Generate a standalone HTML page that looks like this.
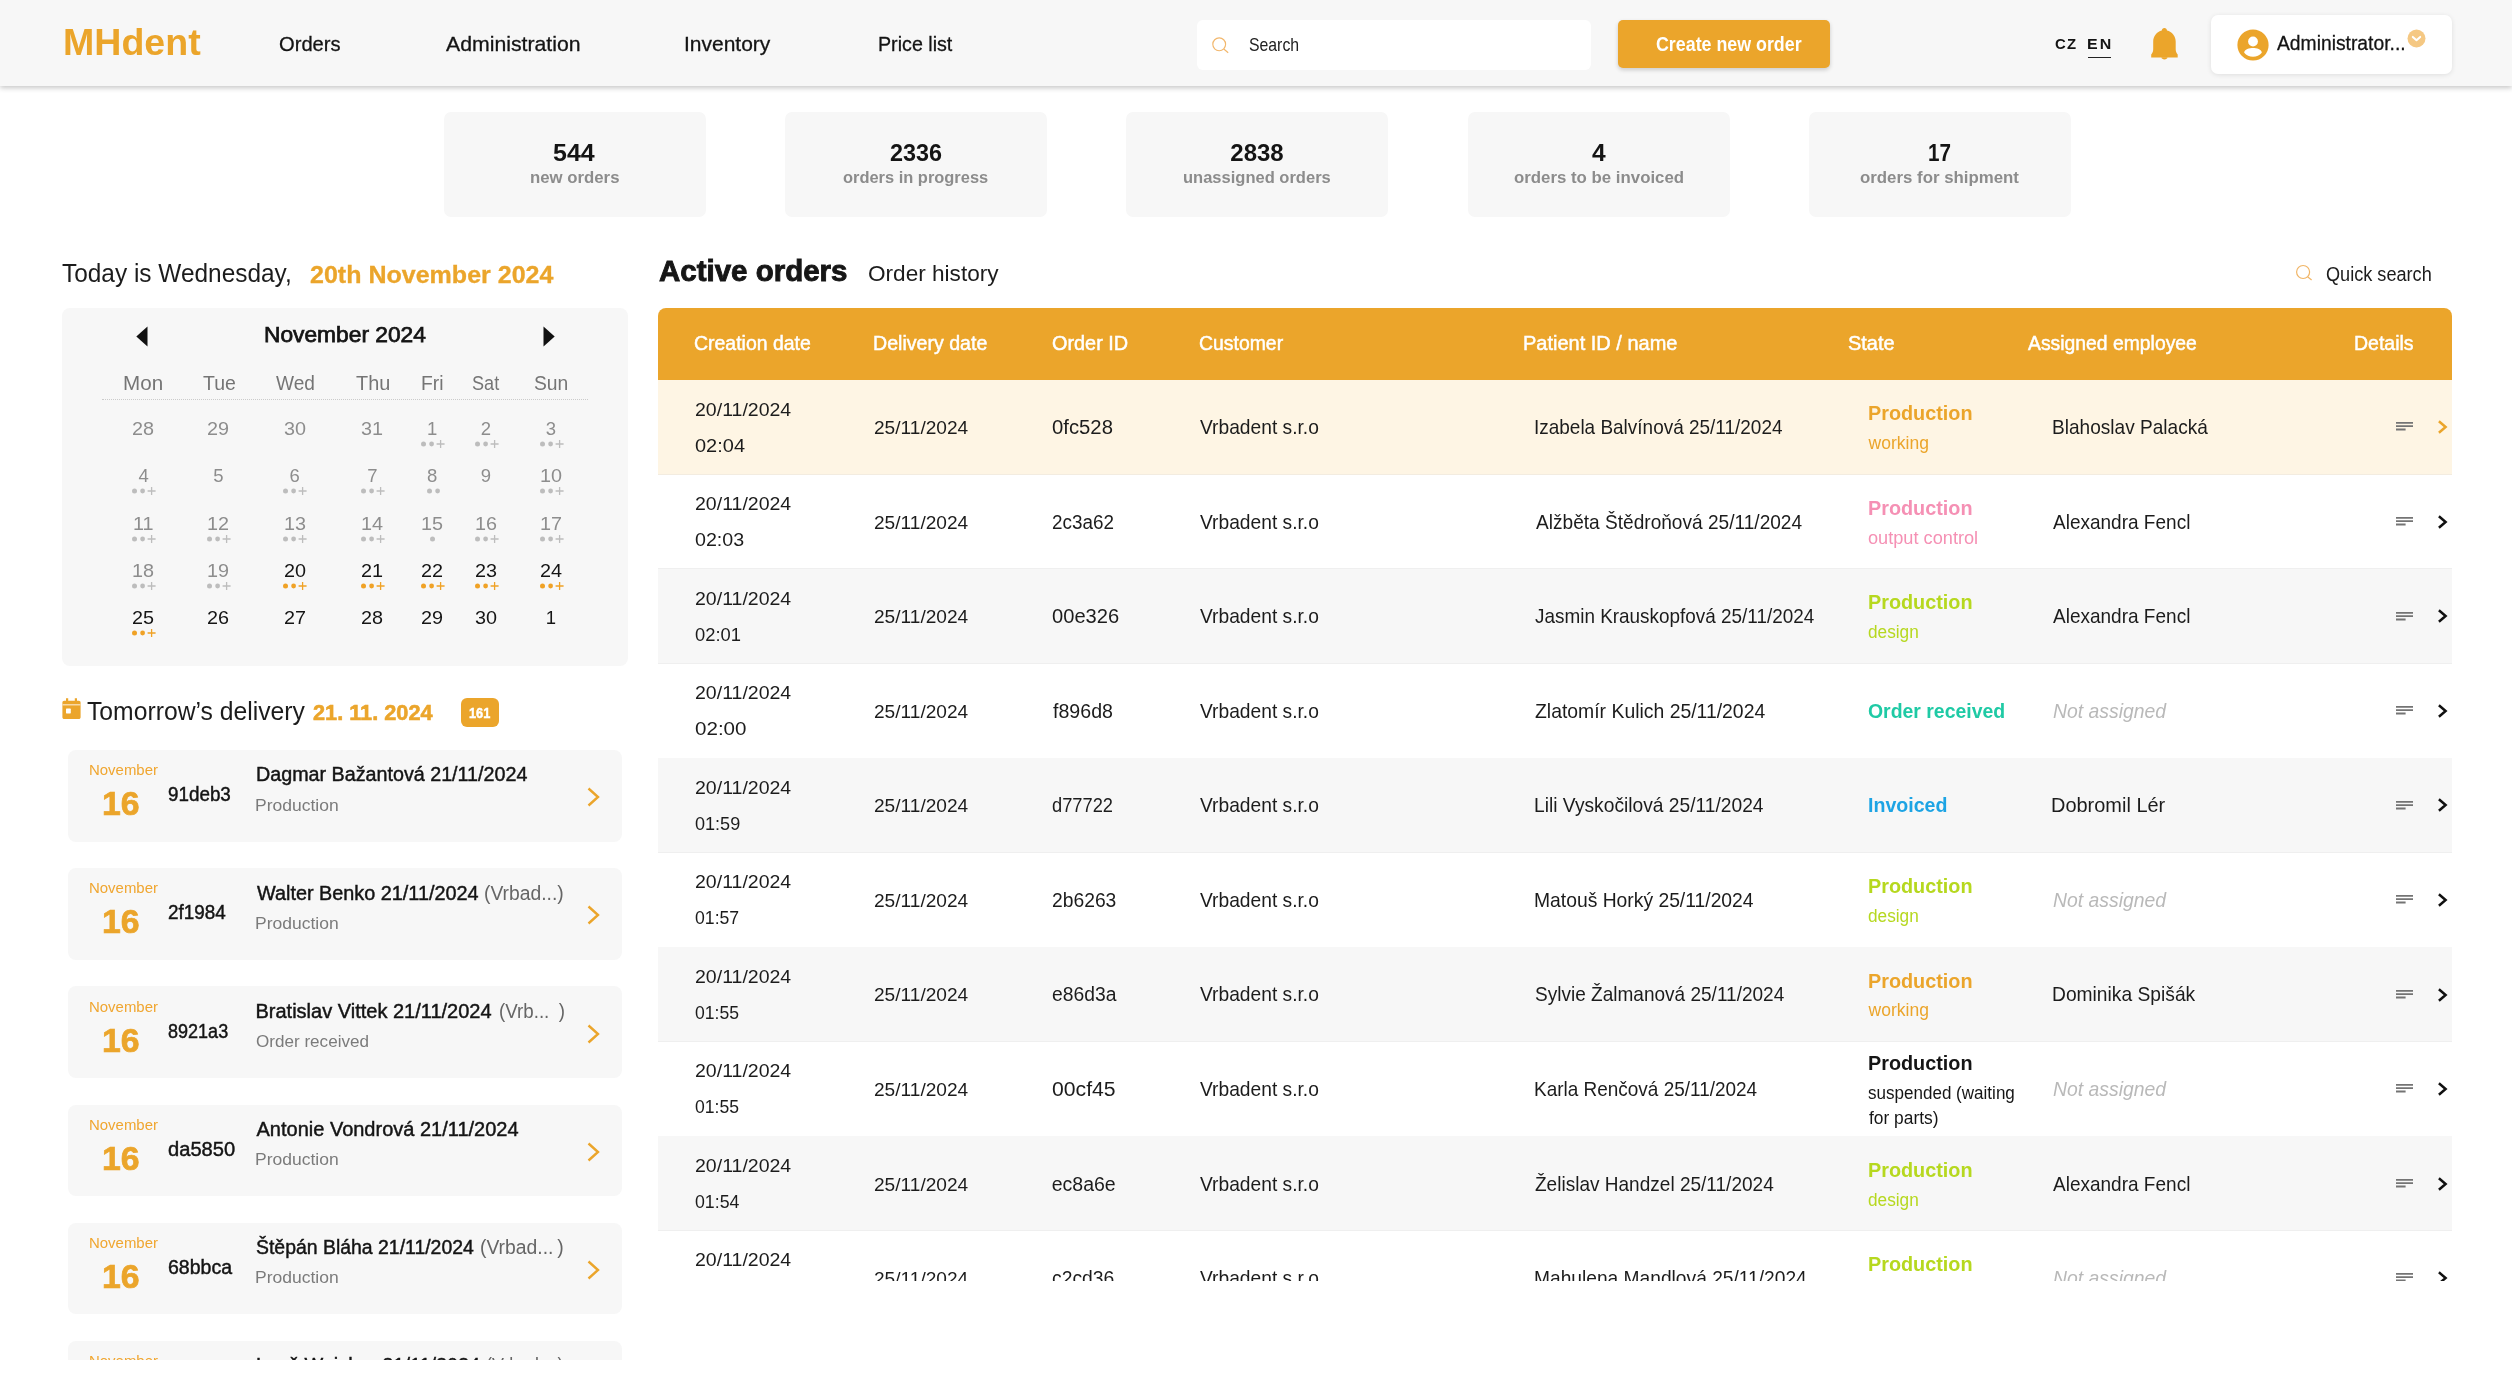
<!DOCTYPE html>
<html lang="en">
<head>
<meta charset="utf-8">
<title>MHdent - Orders</title>
<style>
*{margin:0;padding:0}
html,body{width:2512px;height:1374px;overflow:hidden;background:#fff}
body{position:relative;font-family:"Liberation Sans",sans-serif;color:#141414}
.g{position:absolute;left:0;top:0;width:2512px;overflow:hidden;will-change:transform}
.b{position:absolute;display:block}
.t{position:absolute;white-space:pre;line-height:1;transform-origin:0 0}
</style>
</head>
<body>
<section class="g" style="top:0;height:240px">
<div class="b" style="left:443.6px;top:112.2px;width:262.2px;height:104.4px;background:#f7f7f7;border-radius:7px;"></div>
<span class="t" style="font-size:24px;top:141px;font-weight:700;left:553.36px;transform:scaleX(1.0410);">544</span>
<span class="t" style="font-size:17px;top:169px;font-weight:700;color:#8c8c8c;left:529.81px;transform:scaleX(0.9865);">new orders</span>
<div class="b" style="left:784.9px;top:112.2px;width:262.2px;height:104.4px;background:#f7f7f7;border-radius:7px;"></div>
<span class="t" style="font-size:24px;top:141px;font-weight:700;left:889.68px;transform:scaleX(0.9750);">2336</span>
<span class="t" style="font-size:17px;top:169px;font-weight:700;color:#8c8c8c;left:843.03px;transform:scaleX(0.9664);">orders in progress</span>
<div class="b" style="left:1126.2px;top:112.2px;width:262.2px;height:104.4px;background:#f7f7f7;border-radius:7px;"></div>
<span class="t" style="font-size:24px;top:141px;font-weight:700;left:1230.30px;">2838</span>
<span class="t" style="font-size:17px;top:169px;font-weight:700;color:#8c8c8c;left:1182.98px;transform:scaleX(0.9715);">unassigned orders</span>
<div class="b" style="left:1467.5px;top:112.2px;width:262.2px;height:104.4px;background:#f7f7f7;border-radius:7px;"></div>
<span class="t" style="font-size:24px;top:141px;font-weight:700;left:1591.95px;transform:scaleX(1.0231);">4</span>
<span class="t" style="font-size:17px;top:169px;font-weight:700;color:#8c8c8c;left:1513.51px;transform:scaleX(0.9894);">orders to be invoiced</span>
<div class="b" style="left:1808.8px;top:112.2px;width:262.2px;height:104.4px;background:#f7f7f7;border-radius:7px;"></div>
<span class="t" style="font-size:24px;top:141px;font-weight:700;left:1928.29px;transform:scaleX(0.8600);">17</span>
<span class="t" style="font-size:17px;top:169px;font-weight:700;color:#8c8c8c;left:1859.71px;transform:scaleX(0.9900);">orders for shipment</span>
</section>
<aside class="g" style="top:0;height:1359.6px">
<span class="t" style="font-size:25.2px;top:261px;color:#1c1c1c;left:62.03px;transform:scaleX(0.9692);">Today is Wednesday,</span>
<span class="t" style="font-size:23.5px;top:264px;font-weight:700;color:#eba52b;-webkit-text-stroke:0.3px #eba52b;left:309.54px;transform:scaleX(1.0649);">20th November 2024</span>
<div class="b" style="left:62.4px;top:307.8px;width:565.2px;height:358.1px;background:#f7f7f7;border-radius:8px;"></div>
<span class="t" style="font-size:22.5px;top:324px;-webkit-text-stroke:0.75px #141414;left:263.59px;transform:scaleX(1.0113);">November 2024</span>
<svg class="b" style="left:136px;top:326px" width="12" height="21" viewBox="0 0 12 21"><path d="M11.5 .4v20.200L.3 10.500z" fill="#111"/></svg>
<svg class="b" style="left:542.500px;top:326px" width="12" height="21" viewBox="0 0 12 21"><path d="M.5 .4v20.200l11.200-10.100z" fill="#111"/></svg>
<span class="t" style="font-size:20.5px;top:373px;color:#757575;left:122.89px;transform:scaleX(1.0054);">Mon</span>
<span class="t" style="font-size:20.5px;top:373px;color:#757575;left:202.55px;transform:scaleX(0.9500);">Tue</span>
<span class="t" style="font-size:20.5px;top:373px;color:#757575;left:276.00px;transform:scaleX(0.9317);">Wed</span>
<span class="t" style="font-size:20.5px;top:373px;color:#757575;left:356.20px;transform:scaleX(0.9706);">Thu</span>
<span class="t" style="font-size:20.5px;top:373px;color:#757575;left:420.81px;transform:scaleX(0.9429);">Fri</span>
<span class="t" style="font-size:20.5px;top:373px;color:#757575;left:472.17px;transform:scaleX(0.8833);">Sat</span>
<span class="t" style="font-size:20.5px;top:373px;color:#757575;left:534.36px;transform:scaleX(0.9412);">Sun</span>
<div class="b" style="left:101.800px;top:399.300px;width:486px;height:0;border-top:1.700px dotted #cbcbcb"></div>
<span class="t" style="font-size:18.5px;top:420px;color:#8d8d8d;left:132.26px;transform:scaleX(1.0700);">28</span>
<span class="t" style="font-size:18.5px;top:420px;color:#8d8d8d;left:207.46px;transform:scaleX(1.0700);">29</span>
<span class="t" style="font-size:18.5px;top:420px;color:#8d8d8d;left:283.87px;transform:scaleX(1.0700);">30</span>
<span class="t" style="font-size:18.5px;top:420px;color:#8d8d8d;left:361.46px;transform:scaleX(1.0700);">31</span>
<span class="t" style="font-size:18.5px;top:420px;color:#8d8d8d;left:427.10px;">1</span>
<svg class="b" style="left:418.9px;top:439.1px" width="28" height="10" viewBox="0 0 28 10"><circle cx="4.500" cy="5" r="2.500" fill="#bdbdbd"/><circle cx="12.600" cy="5" r="2.400" fill="#bdbdbd"/><path d="M17.600 5h8M21.600 1v8" stroke="#bdbdbd" stroke-width="1.300" fill="none"/></svg>
<span class="t" style="font-size:18.5px;top:420px;color:#8d8d8d;left:480.80px;">2</span>
<svg class="b" style="left:472.6px;top:439.1px" width="28" height="10" viewBox="0 0 28 10"><circle cx="4.500" cy="5" r="2.500" fill="#bdbdbd"/><circle cx="12.600" cy="5" r="2.400" fill="#bdbdbd"/><path d="M17.600 5h8M21.600 1v8" stroke="#bdbdbd" stroke-width="1.300" fill="none"/></svg>
<span class="t" style="font-size:18.5px;top:420px;color:#8d8d8d;left:545.80px;">3</span>
<svg class="b" style="left:537.6px;top:439.1px" width="28" height="10" viewBox="0 0 28 10"><circle cx="4.500" cy="5" r="2.500" fill="#bdbdbd"/><circle cx="12.600" cy="5" r="2.400" fill="#bdbdbd"/><path d="M17.600 5h8M21.600 1v8" stroke="#bdbdbd" stroke-width="1.300" fill="none"/></svg>
<span class="t" style="font-size:18.5px;top:467px;color:#8d8d8d;left:138.50px;">4</span>
<svg class="b" style="left:129.8px;top:486.4px" width="28" height="10" viewBox="0 0 28 10"><circle cx="4.500" cy="5" r="2.500" fill="#bdbdbd"/><circle cx="12.600" cy="5" r="2.400" fill="#bdbdbd"/><path d="M17.600 5h8M21.600 1v8" stroke="#bdbdbd" stroke-width="1.300" fill="none"/></svg>
<span class="t" style="font-size:18.5px;top:467px;color:#8d8d8d;left:213.20px;">5</span>
<span class="t" style="font-size:18.5px;top:467px;color:#8d8d8d;left:289.60px;">6</span>
<svg class="b" style="left:281.4px;top:486.4px" width="28" height="10" viewBox="0 0 28 10"><circle cx="4.500" cy="5" r="2.500" fill="#bdbdbd"/><circle cx="12.600" cy="5" r="2.400" fill="#bdbdbd"/><path d="M17.600 5h8M21.600 1v8" stroke="#bdbdbd" stroke-width="1.300" fill="none"/></svg>
<span class="t" style="font-size:18.5px;top:467px;color:#8d8d8d;left:367.20px;">7</span>
<svg class="b" style="left:359.0px;top:486.4px" width="28" height="10" viewBox="0 0 28 10"><circle cx="4.500" cy="5" r="2.500" fill="#bdbdbd"/><circle cx="12.600" cy="5" r="2.400" fill="#bdbdbd"/><path d="M17.600 5h8M21.600 1v8" stroke="#bdbdbd" stroke-width="1.300" fill="none"/></svg>
<span class="t" style="font-size:18.5px;top:467px;color:#8d8d8d;left:427.10px;">8</span>
<svg class="b" style="left:424.7px;top:486.4px" width="28" height="10" viewBox="0 0 28 10"><circle cx="4.500" cy="5" r="2.500" fill="#bdbdbd"/><circle cx="12.600" cy="5" r="2.400" fill="#bdbdbd"/></svg>
<span class="t" style="font-size:18.5px;top:467px;color:#8d8d8d;left:480.80px;">9</span>
<span class="t" style="font-size:18.5px;top:467px;color:#8d8d8d;left:540.06px;transform:scaleX(1.0700);">10</span>
<svg class="b" style="left:537.6px;top:486.4px" width="28" height="10" viewBox="0 0 28 10"><circle cx="4.500" cy="5" r="2.500" fill="#bdbdbd"/><circle cx="12.600" cy="5" r="2.400" fill="#bdbdbd"/><path d="M17.600 5h8M21.600 1v8" stroke="#bdbdbd" stroke-width="1.300" fill="none"/></svg>
<span class="t" style="font-size:18.5px;top:515px;color:#8d8d8d;left:132.80px;transform:scaleX(1.0700);">11</span>
<svg class="b" style="left:129.8px;top:533.6px" width="28" height="10" viewBox="0 0 28 10"><circle cx="4.500" cy="5" r="2.500" fill="#bdbdbd"/><circle cx="12.600" cy="5" r="2.400" fill="#bdbdbd"/><path d="M17.600 5h8M21.600 1v8" stroke="#bdbdbd" stroke-width="1.300" fill="none"/></svg>
<span class="t" style="font-size:18.5px;top:515px;color:#8d8d8d;left:207.46px;transform:scaleX(1.0700);">12</span>
<svg class="b" style="left:205.0px;top:533.6px" width="28" height="10" viewBox="0 0 28 10"><circle cx="4.500" cy="5" r="2.500" fill="#bdbdbd"/><circle cx="12.600" cy="5" r="2.400" fill="#bdbdbd"/><path d="M17.600 5h8M21.600 1v8" stroke="#bdbdbd" stroke-width="1.300" fill="none"/></svg>
<span class="t" style="font-size:18.5px;top:515px;color:#8d8d8d;left:283.87px;transform:scaleX(1.0700);">13</span>
<svg class="b" style="left:281.4px;top:533.6px" width="28" height="10" viewBox="0 0 28 10"><circle cx="4.500" cy="5" r="2.500" fill="#bdbdbd"/><circle cx="12.600" cy="5" r="2.400" fill="#bdbdbd"/><path d="M17.600 5h8M21.600 1v8" stroke="#bdbdbd" stroke-width="1.300" fill="none"/></svg>
<span class="t" style="font-size:18.5px;top:515px;color:#8d8d8d;left:361.46px;transform:scaleX(1.0700);">14</span>
<svg class="b" style="left:359.0px;top:533.6px" width="28" height="10" viewBox="0 0 28 10"><circle cx="4.500" cy="5" r="2.500" fill="#bdbdbd"/><circle cx="12.600" cy="5" r="2.400" fill="#bdbdbd"/><path d="M17.600 5h8M21.600 1v8" stroke="#bdbdbd" stroke-width="1.300" fill="none"/></svg>
<span class="t" style="font-size:18.5px;top:515px;color:#8d8d8d;left:421.37px;transform:scaleX(1.0700);">15</span>
<svg class="b" style="left:428.4px;top:533.6px" width="28" height="10" viewBox="0 0 28 10"><circle cx="4.500" cy="5" r="2.500" fill="#bdbdbd"/></svg>
<span class="t" style="font-size:18.5px;top:515px;color:#8d8d8d;left:475.06px;transform:scaleX(1.0700);">16</span>
<svg class="b" style="left:472.6px;top:533.6px" width="28" height="10" viewBox="0 0 28 10"><circle cx="4.500" cy="5" r="2.500" fill="#bdbdbd"/><circle cx="12.600" cy="5" r="2.400" fill="#bdbdbd"/><path d="M17.600 5h8M21.600 1v8" stroke="#bdbdbd" stroke-width="1.300" fill="none"/></svg>
<span class="t" style="font-size:18.5px;top:515px;color:#8d8d8d;left:540.06px;transform:scaleX(1.0700);">17</span>
<svg class="b" style="left:537.6px;top:533.6px" width="28" height="10" viewBox="0 0 28 10"><circle cx="4.500" cy="5" r="2.500" fill="#bdbdbd"/><circle cx="12.600" cy="5" r="2.400" fill="#bdbdbd"/><path d="M17.600 5h8M21.600 1v8" stroke="#bdbdbd" stroke-width="1.300" fill="none"/></svg>
<span class="t" style="font-size:18.5px;top:562px;color:#8d8d8d;left:132.26px;transform:scaleX(1.0700);">18</span>
<svg class="b" style="left:129.8px;top:580.9px" width="28" height="10" viewBox="0 0 28 10"><circle cx="4.500" cy="5" r="2.500" fill="#bdbdbd"/><circle cx="12.600" cy="5" r="2.400" fill="#bdbdbd"/><path d="M17.600 5h8M21.600 1v8" stroke="#bdbdbd" stroke-width="1.300" fill="none"/></svg>
<span class="t" style="font-size:18.5px;top:562px;color:#8d8d8d;left:207.46px;transform:scaleX(1.0700);">19</span>
<svg class="b" style="left:205.0px;top:580.9px" width="28" height="10" viewBox="0 0 28 10"><circle cx="4.500" cy="5" r="2.500" fill="#bdbdbd"/><circle cx="12.600" cy="5" r="2.400" fill="#bdbdbd"/><path d="M17.600 5h8M21.600 1v8" stroke="#bdbdbd" stroke-width="1.300" fill="none"/></svg>
<span class="t" style="font-size:18.5px;top:562px;color:#151515;left:283.87px;transform:scaleX(1.0700);">20</span>
<svg class="b" style="left:281.4px;top:580.9px" width="28" height="10" viewBox="0 0 28 10"><circle cx="4.500" cy="5" r="2.500" fill="#f0a226"/><circle cx="12.600" cy="5" r="2.400" fill="#f0a226"/><path d="M17.600 5h8M21.600 1v8" stroke="#f0a226" stroke-width="1.300" fill="none"/></svg>
<span class="t" style="font-size:18.5px;top:562px;color:#151515;left:361.46px;transform:scaleX(1.0700);">21</span>
<svg class="b" style="left:359.0px;top:580.9px" width="28" height="10" viewBox="0 0 28 10"><circle cx="4.500" cy="5" r="2.500" fill="#f0a226"/><circle cx="12.600" cy="5" r="2.400" fill="#f0a226"/><path d="M17.600 5h8M21.600 1v8" stroke="#f0a226" stroke-width="1.300" fill="none"/></svg>
<span class="t" style="font-size:18.5px;top:562px;color:#151515;left:421.37px;transform:scaleX(1.0700);">22</span>
<svg class="b" style="left:418.9px;top:580.9px" width="28" height="10" viewBox="0 0 28 10"><circle cx="4.500" cy="5" r="2.500" fill="#f0a226"/><circle cx="12.600" cy="5" r="2.400" fill="#f0a226"/><path d="M17.600 5h8M21.600 1v8" stroke="#f0a226" stroke-width="1.300" fill="none"/></svg>
<span class="t" style="font-size:18.5px;top:562px;color:#151515;left:475.06px;transform:scaleX(1.0700);">23</span>
<svg class="b" style="left:472.6px;top:580.9px" width="28" height="10" viewBox="0 0 28 10"><circle cx="4.500" cy="5" r="2.500" fill="#f0a226"/><circle cx="12.600" cy="5" r="2.400" fill="#f0a226"/><path d="M17.600 5h8M21.600 1v8" stroke="#f0a226" stroke-width="1.300" fill="none"/></svg>
<span class="t" style="font-size:18.5px;top:562px;color:#151515;left:540.06px;transform:scaleX(1.0700);">24</span>
<svg class="b" style="left:537.6px;top:580.9px" width="28" height="10" viewBox="0 0 28 10"><circle cx="4.500" cy="5" r="2.500" fill="#f0a226"/><circle cx="12.600" cy="5" r="2.400" fill="#f0a226"/><path d="M17.600 5h8M21.600 1v8" stroke="#f0a226" stroke-width="1.300" fill="none"/></svg>
<span class="t" style="font-size:18.5px;top:609px;color:#151515;left:132.26px;transform:scaleX(1.0700);">25</span>
<svg class="b" style="left:129.8px;top:628.1px" width="28" height="10" viewBox="0 0 28 10"><circle cx="4.500" cy="5" r="2.500" fill="#f0a226"/><circle cx="12.600" cy="5" r="2.400" fill="#f0a226"/><path d="M17.600 5h8M21.600 1v8" stroke="#f0a226" stroke-width="1.300" fill="none"/></svg>
<span class="t" style="font-size:18.5px;top:609px;color:#151515;left:207.46px;transform:scaleX(1.0700);">26</span>
<span class="t" style="font-size:18.5px;top:609px;color:#151515;left:283.87px;transform:scaleX(1.0700);">27</span>
<span class="t" style="font-size:18.5px;top:609px;color:#151515;left:361.46px;transform:scaleX(1.0700);">28</span>
<span class="t" style="font-size:18.5px;top:609px;color:#151515;left:421.37px;transform:scaleX(1.0700);">29</span>
<span class="t" style="font-size:18.5px;top:609px;color:#151515;left:475.06px;transform:scaleX(1.0700);">30</span>
<span class="t" style="font-size:18.5px;top:609px;color:#151515;left:545.80px;">1</span>
<svg class="b" style="left:62px;top:698px" width="19" height="22" viewBox="0 0 19 22"><path d="M4 .3h2.200v2.500h6.600V.3H15v2.500h1.800c1 0 1.800.8 1.800 1.800v14.700c0 1-.8 1.800-1.800 1.800H2.200c-1 0-1.800-.8-1.800-1.800V4.600c0-1 .8-1.800 1.800-1.800H4z" fill="#eba52b"/><rect x="2.600" y="7.400" width="13.800" height="11.400" fill="#eba52b"/><rect x=".4" y="6" width="18.200" height="1.500" fill="#f7d9a6"/><rect x="4" y="10.600" width="4.800" height="4.800" rx=".6" fill="#fff"/></svg>
<span class="t" style="font-size:25px;top:699px;color:#1c1c1c;left:87.41px;transform:scaleX(0.9886);">Tomorrow’s delivery</span>
<span class="t" style="font-size:22.5px;top:702px;font-weight:700;color:#eba52b;-webkit-text-stroke:0.6px #eba52b;left:312.60px;transform:scaleX(0.9653);">21. 11. 2024</span>
<div class="b" style="left:460.6px;top:697.9px;width:38.8px;height:29.6px;background:#eba52b;border-radius:6px;"></div>
<span class="t" style="font-size:15.5px;top:705px;font-weight:700;color:#fff;-webkit-text-stroke:0.5px #fff;left:468.78px;transform:scaleX(0.8240);">161</span>
<div class="b" style="left:68.0px;top:750.0px;width:553.8px;height:91.6px;background:#f7f7f7;border-radius:8px;"></div>
<span class="t" style="font-size:15.5px;top:762px;color:#f0a630;left:88.74px;transform:scaleX(0.9643);">November</span>
<span class="t" style="font-size:34px;top:786px;font-weight:700;color:#eba52b;-webkit-text-stroke:0.7px #eba52b;left:101.81px;transform:scaleX(0.9943);">16</span>
<span class="t" style="font-size:20px;top:784px;-webkit-text-stroke:0.45px #141414;left:168.06px;transform:scaleX(0.9415);">91deb3</span>
<span class="t" style="font-size:20px;top:764px;-webkit-text-stroke:0.45px #141414;left:255.51px;transform:scaleX(0.9854);">Dagmar Bažantová 21/11/2024</span>
<span class="t" style="font-size:17.3px;top:797px;color:#7b7b7b;left:255.49px;transform:scaleX(1.0123);">Production</span>
<svg class="b" style="left:586px;top:787.2px" width="15" height="20" viewBox="0 0 15 20"><path d="M2.500 1.500 L12 10 L2.500 18.500" fill="none" stroke="#eba52b" stroke-width="2.400"/></svg>
<div class="b" style="left:68.0px;top:868.1px;width:553.8px;height:91.6px;background:#f7f7f7;border-radius:8px;"></div>
<span class="t" style="font-size:15.5px;top:880px;color:#f0a630;left:88.74px;transform:scaleX(0.9643);">November</span>
<span class="t" style="font-size:34px;top:904px;font-weight:700;color:#eba52b;-webkit-text-stroke:0.7px #eba52b;left:101.81px;transform:scaleX(0.9943);">16</span>
<span class="t" style="font-size:20px;top:902px;-webkit-text-stroke:0.45px #141414;left:168.06px;transform:scaleX(0.9433);">2f1984</span>
<span class="t" style="font-size:20px;top:883px;-webkit-text-stroke:0.45px #141414;left:256.50px;transform:scaleX(0.9915);">Walter Benko 21/11/2024</span>
<span class="t" style="font-size:20px;top:883px;color:#666;left:484.33px;transform:scaleX(0.9654);">(Vrbad...)</span>
<span class="t" style="font-size:17.3px;top:915px;color:#7b7b7b;left:255.49px;transform:scaleX(1.0123);">Production</span>
<svg class="b" style="left:586px;top:905.4px" width="15" height="20" viewBox="0 0 15 20"><path d="M2.500 1.500 L12 10 L2.500 18.500" fill="none" stroke="#eba52b" stroke-width="2.400"/></svg>
<div class="b" style="left:68.0px;top:986.3px;width:553.8px;height:91.6px;background:#f7f7f7;border-radius:8px;"></div>
<span class="t" style="font-size:15.5px;top:999px;color:#f0a630;left:88.74px;transform:scaleX(0.9643);">November</span>
<span class="t" style="font-size:34px;top:1023px;font-weight:700;color:#eba52b;-webkit-text-stroke:0.7px #eba52b;left:101.81px;transform:scaleX(0.9943);">16</span>
<span class="t" style="font-size:20px;top:1021px;-webkit-text-stroke:0.45px #141414;left:168.10px;transform:scaleX(0.9015);">8921a3</span>
<span class="t" style="font-size:20px;top:1001px;-webkit-text-stroke:0.45px #141414;left:255.50px;">Bratislav Vittek 21/11/2024</span>
<span class="t" style="font-size:20px;top:1001px;color:#666;left:498.86px;transform:scaleX(0.9368);">(Vrb... )</span>
<span class="t" style="font-size:17.3px;top:1033px;color:#7b7b7b;left:255.51px;transform:scaleX(0.9884);">Order received</span>
<svg class="b" style="left:586px;top:1023.5px" width="15" height="20" viewBox="0 0 15 20"><path d="M2.500 1.500 L12 10 L2.500 18.500" fill="none" stroke="#eba52b" stroke-width="2.400"/></svg>
<div class="b" style="left:68.0px;top:1104.5px;width:553.8px;height:91.6px;background:#f7f7f7;border-radius:8px;"></div>
<span class="t" style="font-size:15.5px;top:1117px;color:#f0a630;left:88.74px;transform:scaleX(0.9643);">November</span>
<span class="t" style="font-size:34px;top:1141px;font-weight:700;color:#eba52b;-webkit-text-stroke:0.7px #eba52b;left:101.81px;transform:scaleX(0.9943);">16</span>
<span class="t" style="font-size:20px;top:1139px;-webkit-text-stroke:0.45px #141414;left:167.99px;transform:scaleX(1.0062);">da5850</span>
<span class="t" style="font-size:20px;top:1119px;-webkit-text-stroke:0.45px #141414;left:256.50px;">Antonie Vondrová 21/11/2024</span>
<span class="t" style="font-size:17.3px;top:1151px;color:#7b7b7b;left:255.49px;transform:scaleX(1.0123);">Production</span>
<svg class="b" style="left:586px;top:1141.7px" width="15" height="20" viewBox="0 0 15 20"><path d="M2.500 1.500 L12 10 L2.500 18.500" fill="none" stroke="#eba52b" stroke-width="2.400"/></svg>
<div class="b" style="left:68.0px;top:1222.6px;width:553.8px;height:91.6px;background:#f7f7f7;border-radius:8px;"></div>
<span class="t" style="font-size:15.5px;top:1235px;color:#f0a630;left:88.74px;transform:scaleX(0.9643);">November</span>
<span class="t" style="font-size:34px;top:1259px;font-weight:700;color:#eba52b;-webkit-text-stroke:0.7px #eba52b;left:101.81px;transform:scaleX(0.9943);">16</span>
<span class="t" style="font-size:20px;top:1257px;-webkit-text-stroke:0.45px #141414;left:168.02px;transform:scaleX(0.9754);">68bbca</span>
<span class="t" style="font-size:20px;top:1237px;-webkit-text-stroke:0.45px #141414;left:255.53px;transform:scaleX(0.9713);">Štěpán Bláha 21/11/2024</span>
<span class="t" style="font-size:20px;top:1237px;color:#666;left:479.73px;transform:scaleX(0.9671);">(Vrbad... )</span>
<span class="t" style="font-size:17.3px;top:1269px;color:#7b7b7b;left:255.49px;transform:scaleX(1.0123);">Production</span>
<svg class="b" style="left:586px;top:1259.8px" width="15" height="20" viewBox="0 0 15 20"><path d="M2.500 1.500 L12 10 L2.500 18.500" fill="none" stroke="#eba52b" stroke-width="2.400"/></svg>
<div class="b" style="left:68.0px;top:1340.8px;width:553.8px;height:91.6px;background:#f7f7f7;border-radius:8px;"></div>
<span class="t" style="font-size:15.5px;top:1353px;color:#f0a630;left:88.74px;transform:scaleX(0.9643);">November</span>
<span class="t" style="font-size:34px;top:1377px;font-weight:700;color:#eba52b;-webkit-text-stroke:0.7px #eba52b;left:101.81px;transform:scaleX(0.9943);">16</span>
<span class="t" style="font-size:20px;top:1375px;-webkit-text-stroke:0.45px #141414;left:169.00px;transform:scaleX(0.9154);">3c61d8</span>
<span class="t" style="font-size:20px;top:1355px;-webkit-text-stroke:0.45px #141414;left:255.51px;transform:scaleX(0.9911);">Leoš Weishar 21/11/2024</span>
<span class="t" style="font-size:20px;top:1355px;color:#666;left:486.11px;transform:scaleX(0.8941);">(Vrbad... )</span>
<span class="t" style="font-size:17.3px;top:1387px;color:#7b7b7b;left:255.49px;transform:scaleX(1.0123);">Production</span>
<svg class="b" style="left:586px;top:1378.0px" width="15" height="20" viewBox="0 0 15 20"><path d="M2.500 1.500 L12 10 L2.500 18.500" fill="none" stroke="#eba52b" stroke-width="2.400"/></svg>
</aside>
<div class="g" style="top:0;height:307px">
<span class="t" style="font-size:28.8px;top:257px;font-weight:700;color:#161616;-webkit-text-stroke:0.9px #161616;left:659.10px;transform:scaleX(1.0235);">Active orders</span>
<span class="t" style="font-size:21.4px;top:264px;color:#1c1c1c;left:868.24px;transform:scaleX(1.0561);">Order history</span>
<svg class="b" style="left:2293px;top:262px" width="22" height="22" viewBox="0 0 22 22"><circle cx="10.100" cy="10" r="6.500" fill="none" stroke="#f1b566" stroke-width="1.200"/><path d="M14.600 14.800 L18.600 18" stroke="#f1b566" stroke-width="1.200" fill="none"/></svg>
<span class="t" style="font-size:20px;top:264px;color:#1c1c1c;left:2326.09px;transform:scaleX(0.9061);">Quick search</span>
</div>
<main class="g" style="top:0;height:1280.6px">
<div class="b" style="left:658.4px;top:307.8px;width:1793.5px;height:72.2px;background:#eba52b;border-radius:8px 8px 0 0;"></div>
<span class="t" style="font-size:20.5px;top:333px;color:#fff;-webkit-text-stroke:0.5px #fff;left:694.45px;transform:scaleX(0.9492);">Creation date</span>
<span class="t" style="font-size:20.5px;top:333px;color:#fff;-webkit-text-stroke:0.5px #fff;left:873.34px;transform:scaleX(0.9551);">Delivery date</span>
<span class="t" style="font-size:20.5px;top:333px;color:#fff;-webkit-text-stroke:0.5px #fff;left:1051.73px;transform:scaleX(0.9688);">Order ID</span>
<span class="t" style="font-size:20.5px;top:333px;color:#fff;-webkit-text-stroke:0.5px #fff;left:1198.95px;transform:scaleX(0.9466);">Customer</span>
<span class="t" style="font-size:20.5px;top:333px;color:#fff;-webkit-text-stroke:0.5px #fff;left:1523.22px;transform:scaleX(0.9752);">Patient ID / name</span>
<span class="t" style="font-size:20.5px;top:333px;color:#fff;-webkit-text-stroke:0.5px #fff;left:1847.93px;transform:scaleX(0.9717);">State</span>
<span class="t" style="font-size:20.5px;top:333px;color:#fff;-webkit-text-stroke:0.5px #fff;left:2027.80px;transform:scaleX(0.9438);">Assigned employee</span>
<span class="t" style="font-size:20.5px;top:333px;color:#fff;-webkit-text-stroke:0.5px #fff;left:2354.45px;transform:scaleX(0.9508);">Details</span>
<div class="b" style="left:658.4px;top:380.2px;width:1793.5px;height:94.8px;background:#fef5e4;border-bottom:1px solid #f3ece0;box-sizing:border-box;"></div>
<span class="t" style="font-size:18.3px;top:401px;color:#1c1c1c;left:695.33px;transform:scaleX(1.0674);">20/11/2024</span>
<span class="t" style="font-size:18.3px;top:437px;color:#1c1c1c;left:695.31px;transform:scaleX(1.0932);">02:04</span>
<span class="t" style="font-size:18.3px;top:419px;color:#1c1c1c;left:874.16px;transform:scaleX(1.0449);">25/11/2024</span>
<span class="t" style="font-size:19.5px;top:418px;color:#1c1c1c;left:1051.66px;transform:scaleX(1.0404);">0fc528</span>
<span class="t" style="font-size:20.6px;top:417px;color:#1c1c1c;left:1199.90px;transform:scaleX(0.9323);">Vrbadent s.r.o</span>
<span class="t" style="font-size:20.6px;top:417px;color:#1c1c1c;left:1533.76px;transform:scaleX(0.9209);">Izabela Balvínová 25/11/2024</span>
<span class="t" style="font-size:20px;top:403px;font-weight:700;color:#eba52b;left:1867.61px;transform:scaleX(0.9903);">Production</span>
<span class="t" style="font-size:17.5px;top:435px;color:#eba52b;left:1868.60px;">working</span>
<span class="t" style="font-size:20.6px;top:417px;color:#1c1c1c;left:2051.55px;transform:scaleX(0.9259);">Blahoslav Palacká</span>
<svg class="b" style="left:2395.800px;top:421.4px" width="18" height="11" viewBox="0 0 18 11"><path d="M0 1.800h17M0 5.150h17M0 8.500h9.600" stroke="#747474" stroke-width="1.800" fill="none"/></svg>
<svg class="b" style="left:2436px;top:419.3px" width="13" height="16" viewBox="0 0 13 16"><path d="M2.900 2.300 L9.600 8 L2.900 13.700" fill="none" stroke="#eba52b" stroke-width="2.500"/></svg>
<div class="b" style="left:658.4px;top:474.7px;width:1793.5px;height:94.8px;background:#ffffff;border-bottom:1px solid #efefef;box-sizing:border-box;"></div>
<span class="t" style="font-size:18.3px;top:495px;color:#1c1c1c;left:695.33px;transform:scaleX(1.0674);">20/11/2024</span>
<span class="t" style="font-size:18.3px;top:531px;color:#1c1c1c;left:695.32px;transform:scaleX(1.0750);">02:03</span>
<span class="t" style="font-size:18.3px;top:514px;color:#1c1c1c;left:874.16px;transform:scaleX(1.0449);">25/11/2024</span>
<span class="t" style="font-size:19.5px;top:513px;color:#1c1c1c;left:1051.73px;transform:scaleX(0.9677);">2c3a62</span>
<span class="t" style="font-size:20.6px;top:512px;color:#1c1c1c;left:1199.90px;transform:scaleX(0.9323);">Vrbadent s.r.o</span>
<span class="t" style="font-size:20.6px;top:512px;color:#1c1c1c;left:1535.60px;transform:scaleX(0.9272);">Alžběta Štědroňová 25/11/2024</span>
<span class="t" style="font-size:20px;top:498px;font-weight:700;color:#f590b4;left:1867.61px;transform:scaleX(0.9903);">Production</span>
<span class="t" style="font-size:17.5px;top:530px;color:#f590b4;left:1867.56px;transform:scaleX(1.0385);">output control</span>
<span class="t" style="font-size:20.6px;top:512px;color:#1c1c1c;left:2053.40px;transform:scaleX(0.9230);">Alexandra Fencl</span>
<svg class="b" style="left:2395.800px;top:515.9px" width="18" height="11" viewBox="0 0 18 11"><path d="M0 1.800h17M0 5.150h17M0 8.500h9.600" stroke="#747474" stroke-width="1.800" fill="none"/></svg>
<svg class="b" style="left:2436px;top:513.8px" width="13" height="16" viewBox="0 0 13 16"><path d="M2.900 2.300 L9.600 8 L2.900 13.700" fill="none" stroke="#111" stroke-width="2.500"/></svg>
<div class="b" style="left:658.4px;top:569.3px;width:1793.5px;height:94.8px;background:#f7f7f7;border-bottom:1px solid #efefef;box-sizing:border-box;"></div>
<span class="t" style="font-size:18.3px;top:590px;color:#1c1c1c;left:695.33px;transform:scaleX(1.0674);">20/11/2024</span>
<span class="t" style="font-size:18.3px;top:626px;color:#1c1c1c;left:695.40px;transform:scaleX(1.0045);">02:01</span>
<span class="t" style="font-size:18.3px;top:608px;color:#1c1c1c;left:874.16px;transform:scaleX(1.0449);">25/11/2024</span>
<span class="t" style="font-size:19.5px;top:607px;color:#1c1c1c;left:1051.67px;transform:scaleX(1.0317);">00e326</span>
<span class="t" style="font-size:20.6px;top:606px;color:#1c1c1c;left:1199.90px;transform:scaleX(0.9323);">Vrbadent s.r.o</span>
<span class="t" style="font-size:20.6px;top:606px;color:#1c1c1c;left:1534.68px;transform:scaleX(0.9182);">Jasmin Krauskopfová 25/11/2024</span>
<span class="t" style="font-size:20px;top:592px;font-weight:700;color:#b6d81f;left:1867.61px;transform:scaleX(0.9903);">Production</span>
<span class="t" style="font-size:17.5px;top:624px;color:#b6d81f;left:1867.62px;transform:scaleX(0.9840);">design</span>
<span class="t" style="font-size:20.6px;top:606px;color:#1c1c1c;left:2053.40px;transform:scaleX(0.9230);">Alexandra Fencl</span>
<svg class="b" style="left:2395.800px;top:610.5px" width="18" height="11" viewBox="0 0 18 11"><path d="M0 1.800h17M0 5.150h17M0 8.500h9.600" stroke="#747474" stroke-width="1.800" fill="none"/></svg>
<svg class="b" style="left:2436px;top:608.4px" width="13" height="16" viewBox="0 0 13 16"><path d="M2.900 2.300 L9.600 8 L2.900 13.700" fill="none" stroke="#111" stroke-width="2.500"/></svg>
<div class="b" style="left:658.4px;top:663.8px;width:1793.5px;height:94.8px;background:#ffffff;border-bottom:1px solid #efefef;box-sizing:border-box;"></div>
<span class="t" style="font-size:18.3px;top:684px;color:#1c1c1c;left:695.33px;transform:scaleX(1.0674);">20/11/2024</span>
<span class="t" style="font-size:18.3px;top:720px;color:#1c1c1c;left:695.27px;transform:scaleX(1.1250);">02:00</span>
<span class="t" style="font-size:18.3px;top:703px;color:#1c1c1c;left:874.16px;transform:scaleX(1.0449);">25/11/2024</span>
<span class="t" style="font-size:19.5px;top:702px;color:#1c1c1c;left:1052.70px;transform:scaleX(1.0051);">f896d8</span>
<span class="t" style="font-size:20.6px;top:701px;color:#1c1c1c;left:1199.90px;transform:scaleX(0.9323);">Vrbadent s.r.o</span>
<span class="t" style="font-size:20.6px;top:701px;color:#1c1c1c;left:1534.66px;transform:scaleX(0.9412);">Zlatomír Kulich 25/11/2024</span>
<span class="t" style="font-size:20px;top:701px;font-weight:700;color:#1fcaa5;left:1867.63px;transform:scaleX(0.9712);">Order received</span>
<span class="t" style="font-size:20.6px;top:701px;font-style:italic;color:#b9b9b9;left:2052.96px;transform:scaleX(0.9400);">Not assigned</span>
<svg class="b" style="left:2395.800px;top:705.0px" width="18" height="11" viewBox="0 0 18 11"><path d="M0 1.800h17M0 5.150h17M0 8.500h9.600" stroke="#747474" stroke-width="1.800" fill="none"/></svg>
<svg class="b" style="left:2436px;top:702.9px" width="13" height="16" viewBox="0 0 13 16"><path d="M2.900 2.300 L9.600 8 L2.900 13.700" fill="none" stroke="#111" stroke-width="2.500"/></svg>
<div class="b" style="left:658.4px;top:758.3px;width:1793.5px;height:94.8px;background:#f7f7f7;border-bottom:1px solid #efefef;box-sizing:border-box;"></div>
<span class="t" style="font-size:18.3px;top:779px;color:#1c1c1c;left:695.33px;transform:scaleX(1.0674);">20/11/2024</span>
<span class="t" style="font-size:18.3px;top:815px;color:#1c1c1c;left:695.41px;transform:scaleX(0.9886);">01:59</span>
<span class="t" style="font-size:18.3px;top:797px;color:#1c1c1c;left:874.16px;transform:scaleX(1.0449);">25/11/2024</span>
<span class="t" style="font-size:19.5px;top:796px;color:#1c1c1c;left:1051.76px;transform:scaleX(0.9365);">d77722</span>
<span class="t" style="font-size:20.6px;top:795px;color:#1c1c1c;left:1199.90px;transform:scaleX(0.9323);">Vrbadent s.r.o</span>
<span class="t" style="font-size:20.6px;top:795px;color:#1c1c1c;left:1533.74px;transform:scaleX(0.9324);">Lili Vyskočilová 25/11/2024</span>
<span class="t" style="font-size:20px;top:795px;font-weight:700;color:#1da4e4;left:1867.62px;transform:scaleX(0.9797);">Invoiced</span>
<span class="t" style="font-size:20.6px;top:795px;color:#1c1c1c;left:2051.46px;transform:scaleX(0.9690);">Dobromil Lér</span>
<svg class="b" style="left:2395.800px;top:799.5px" width="18" height="11" viewBox="0 0 18 11"><path d="M0 1.800h17M0 5.150h17M0 8.500h9.600" stroke="#747474" stroke-width="1.800" fill="none"/></svg>
<svg class="b" style="left:2436px;top:797.4px" width="13" height="16" viewBox="0 0 13 16"><path d="M2.900 2.300 L9.600 8 L2.900 13.700" fill="none" stroke="#111" stroke-width="2.500"/></svg>
<div class="b" style="left:658.4px;top:852.8px;width:1793.5px;height:94.8px;background:#ffffff;border-bottom:1px solid #efefef;box-sizing:border-box;"></div>
<span class="t" style="font-size:18.3px;top:873px;color:#1c1c1c;left:695.33px;transform:scaleX(1.0674);">20/11/2024</span>
<span class="t" style="font-size:18.3px;top:909px;color:#1c1c1c;left:695.43px;transform:scaleX(0.9659);">01:57</span>
<span class="t" style="font-size:18.3px;top:892px;color:#1c1c1c;left:874.16px;transform:scaleX(1.0449);">25/11/2024</span>
<span class="t" style="font-size:19.5px;top:891px;color:#1c1c1c;left:1051.71px;transform:scaleX(0.9889);">2b6263</span>
<span class="t" style="font-size:20.6px;top:890px;color:#1c1c1c;left:1199.90px;transform:scaleX(0.9323);">Vrbadent s.r.o</span>
<span class="t" style="font-size:20.6px;top:890px;color:#1c1c1c;left:1533.73px;transform:scaleX(0.9371);">Matouš Horký 25/11/2024</span>
<span class="t" style="font-size:20px;top:876px;font-weight:700;color:#b6d81f;left:1867.61px;transform:scaleX(0.9903);">Production</span>
<span class="t" style="font-size:17.5px;top:908px;color:#b6d81f;left:1867.62px;transform:scaleX(0.9840);">design</span>
<span class="t" style="font-size:20.6px;top:890px;font-style:italic;color:#b9b9b9;left:2052.96px;transform:scaleX(0.9400);">Not assigned</span>
<svg class="b" style="left:2395.800px;top:894.0px" width="18" height="11" viewBox="0 0 18 11"><path d="M0 1.800h17M0 5.150h17M0 8.500h9.600" stroke="#747474" stroke-width="1.800" fill="none"/></svg>
<svg class="b" style="left:2436px;top:891.9px" width="13" height="16" viewBox="0 0 13 16"><path d="M2.900 2.300 L9.600 8 L2.900 13.700" fill="none" stroke="#111" stroke-width="2.500"/></svg>
<div class="b" style="left:658.4px;top:947.4px;width:1793.5px;height:94.8px;background:#f7f7f7;border-bottom:1px solid #efefef;box-sizing:border-box;"></div>
<span class="t" style="font-size:18.3px;top:968px;color:#1c1c1c;left:695.33px;transform:scaleX(1.0674);">20/11/2024</span>
<span class="t" style="font-size:18.3px;top:1004px;color:#1c1c1c;left:695.44px;transform:scaleX(0.9614);">01:55</span>
<span class="t" style="font-size:18.3px;top:986px;color:#1c1c1c;left:874.16px;transform:scaleX(1.0449);">25/11/2024</span>
<span class="t" style="font-size:19.5px;top:985px;color:#1c1c1c;left:1051.71px;transform:scaleX(0.9891);">e86d3a</span>
<span class="t" style="font-size:20.6px;top:984px;color:#1c1c1c;left:1199.90px;transform:scaleX(0.9323);">Vrbadent s.r.o</span>
<span class="t" style="font-size:20.6px;top:984px;color:#1c1c1c;left:1534.68px;transform:scaleX(0.9239);">Sylvie Žalmanová 25/11/2024</span>
<span class="t" style="font-size:20px;top:971px;font-weight:700;color:#eba52b;left:1867.61px;transform:scaleX(0.9903);">Production</span>
<span class="t" style="font-size:17.5px;top:1002px;color:#eba52b;left:1868.60px;">working</span>
<span class="t" style="font-size:20.6px;top:984px;color:#1c1c1c;left:2051.53px;transform:scaleX(0.9338);">Dominika Spišák</span>
<svg class="b" style="left:2395.800px;top:988.6px" width="18" height="11" viewBox="0 0 18 11"><path d="M0 1.800h17M0 5.150h17M0 8.500h9.600" stroke="#747474" stroke-width="1.800" fill="none"/></svg>
<svg class="b" style="left:2436px;top:986.5px" width="13" height="16" viewBox="0 0 13 16"><path d="M2.900 2.300 L9.600 8 L2.900 13.700" fill="none" stroke="#111" stroke-width="2.500"/></svg>
<div class="b" style="left:658.4px;top:1041.9px;width:1793.5px;height:94.8px;background:#ffffff;border-bottom:1px solid #efefef;box-sizing:border-box;"></div>
<span class="t" style="font-size:18.3px;top:1062px;color:#1c1c1c;left:695.33px;transform:scaleX(1.0674);">20/11/2024</span>
<span class="t" style="font-size:18.3px;top:1098px;color:#1c1c1c;left:695.44px;transform:scaleX(0.9614);">01:55</span>
<span class="t" style="font-size:18.3px;top:1081px;color:#1c1c1c;left:874.16px;transform:scaleX(1.0449);">25/11/2024</span>
<span class="t" style="font-size:19.5px;top:1080px;color:#1c1c1c;left:1051.61px;transform:scaleX(1.0860);">00cf45</span>
<span class="t" style="font-size:20.6px;top:1079px;color:#1c1c1c;left:1199.90px;transform:scaleX(0.9323);">Vrbadent s.r.o</span>
<span class="t" style="font-size:20.6px;top:1079px;color:#1c1c1c;left:1533.76px;transform:scaleX(0.9208);">Karla Renčová 25/11/2024</span>
<span class="t" style="font-size:20px;top:1053px;font-weight:700;color:#151515;left:1867.61px;transform:scaleX(0.9903);">Production</span>
<span class="t" style="font-size:17.5px;top:1085px;color:#151515;left:1867.63px;transform:scaleX(0.9738);">suspended (waiting</span>
<span class="t" style="font-size:17.5px;top:1110px;color:#151515;left:1868.60px;transform:scaleX(0.9928);">for parts)</span>
<span class="t" style="font-size:20.6px;top:1079px;font-style:italic;color:#b9b9b9;left:2052.96px;transform:scaleX(0.9400);">Not assigned</span>
<svg class="b" style="left:2395.800px;top:1083.1px" width="18" height="11" viewBox="0 0 18 11"><path d="M0 1.800h17M0 5.150h17M0 8.500h9.600" stroke="#747474" stroke-width="1.800" fill="none"/></svg>
<svg class="b" style="left:2436px;top:1081.0px" width="13" height="16" viewBox="0 0 13 16"><path d="M2.900 2.300 L9.600 8 L2.900 13.700" fill="none" stroke="#111" stroke-width="2.500"/></svg>
<div class="b" style="left:658.4px;top:1136.4px;width:1793.5px;height:94.8px;background:#f7f7f7;border-bottom:1px solid #efefef;box-sizing:border-box;"></div>
<span class="t" style="font-size:18.3px;top:1157px;color:#1c1c1c;left:695.33px;transform:scaleX(1.0674);">20/11/2024</span>
<span class="t" style="font-size:18.3px;top:1193px;color:#1c1c1c;left:695.43px;transform:scaleX(0.9705);">01:54</span>
<span class="t" style="font-size:18.3px;top:1176px;color:#1c1c1c;left:874.16px;transform:scaleX(1.0449);">25/11/2024</span>
<span class="t" style="font-size:19.5px;top:1175px;color:#1c1c1c;left:1051.70px;">ec8a6e</span>
<span class="t" style="font-size:20.6px;top:1174px;color:#1c1c1c;left:1199.90px;transform:scaleX(0.9323);">Vrbadent s.r.o</span>
<span class="t" style="font-size:20.6px;top:1174px;color:#1c1c1c;left:1534.68px;transform:scaleX(0.9241);">Želislav Handzel 25/11/2024</span>
<span class="t" style="font-size:20px;top:1160px;font-weight:700;color:#b6d81f;left:1867.61px;transform:scaleX(0.9903);">Production</span>
<span class="t" style="font-size:17.5px;top:1192px;color:#b6d81f;left:1867.62px;transform:scaleX(0.9840);">design</span>
<span class="t" style="font-size:20.6px;top:1174px;color:#1c1c1c;left:2053.40px;transform:scaleX(0.9230);">Alexandra Fencl</span>
<svg class="b" style="left:2395.800px;top:1177.6px" width="18" height="11" viewBox="0 0 18 11"><path d="M0 1.800h17M0 5.150h17M0 8.500h9.600" stroke="#747474" stroke-width="1.800" fill="none"/></svg>
<svg class="b" style="left:2436px;top:1175.5px" width="13" height="16" viewBox="0 0 13 16"><path d="M2.900 2.300 L9.600 8 L2.900 13.700" fill="none" stroke="#111" stroke-width="2.500"/></svg>
<div class="b" style="left:658.4px;top:1231.0px;width:1793.5px;height:94.8px;background:#ffffff;border-bottom:1px solid #efefef;box-sizing:border-box;"></div>
<span class="t" style="font-size:18.3px;top:1251px;color:#1c1c1c;left:695.33px;transform:scaleX(1.0674);">20/11/2024</span>
<span class="t" style="font-size:18.3px;top:1287px;color:#1c1c1c;left:695.43px;transform:scaleX(0.9659);">01:53</span>
<span class="t" style="font-size:18.3px;top:1270px;color:#1c1c1c;left:874.16px;transform:scaleX(1.0449);">25/11/2024</span>
<span class="t" style="font-size:19.5px;top:1269px;color:#1c1c1c;left:1051.71px;transform:scaleX(0.9902);">c2cd36</span>
<span class="t" style="font-size:20.6px;top:1268px;color:#1c1c1c;left:1199.90px;transform:scaleX(0.9323);">Vrbadent s.r.o</span>
<span class="t" style="font-size:20.6px;top:1268px;color:#1c1c1c;left:1533.74px;transform:scaleX(0.9317);">Mahulena Mandlová 25/11/2024</span>
<span class="t" style="font-size:20px;top:1254px;font-weight:700;color:#b6d81f;left:1867.61px;transform:scaleX(0.9903);">Production</span>
<span class="t" style="font-size:17.5px;top:1286px;color:#b6d81f;left:1867.62px;transform:scaleX(0.9840);">design</span>
<span class="t" style="font-size:20.6px;top:1268px;font-style:italic;color:#b9b9b9;left:2052.96px;transform:scaleX(0.9400);">Not assigned</span>
<svg class="b" style="left:2395.800px;top:1272.2px" width="18" height="11" viewBox="0 0 18 11"><path d="M0 1.800h17M0 5.150h17M0 8.500h9.600" stroke="#747474" stroke-width="1.800" fill="none"/></svg>
<svg class="b" style="left:2436px;top:1270.1px" width="13" height="16" viewBox="0 0 13 16"><path d="M2.900 2.300 L9.600 8 L2.900 13.700" fill="none" stroke="#111" stroke-width="2.500"/></svg>
</main>
<header class="g" style="top:0;height:110px">
<div class="b" style="left:0.0px;top:0.0px;width:2512.0px;height:86.0px;background:#f7f7f7;box-shadow:0 2px 5px rgba(0,0,0,.22);"></div>
<span class="t" style="font-size:37px;top:24px;font-weight:700;color:#eba52b;left:62.97px;transform:scaleX(1.0150);">MHdent</span>
<span class="t" style="font-size:21px;top:33px;-webkit-text-stroke:0.3px #141414;left:278.54px;transform:scaleX(0.9603);">Orders</span>
<span class="t" style="font-size:21px;top:33px;-webkit-text-stroke:0.3px #141414;left:446.00px;transform:scaleX(1.0114);">Administration</span>
<span class="t" style="font-size:21px;top:33px;-webkit-text-stroke:0.3px #141414;left:683.99px;">Inventory</span>
<span class="t" style="font-size:21px;top:33px;-webkit-text-stroke:0.3px #141414;left:877.56px;transform:scaleX(0.9367);">Price list</span>
<div class="b" style="left:1197.0px;top:20.2px;width:394.0px;height:50.2px;background:#fff;border-radius:6px;"></div>
<svg class="b" style="left:1209px;top:34px" width="24" height="24" viewBox="0 0 24 24"><circle cx="10.200" cy="10.300" r="6.400" fill="none" stroke="#f2b76c" stroke-width="1.150"/><path d="M14.800 15 L19.200 18.700" stroke="#f2b76c" stroke-width="1.150" fill="none"/></svg>
<span class="t" style="font-size:18.5px;top:36px;color:#222;left:1248.85px;transform:scaleX(0.8544);">Search</span>
<div class="b" style="left:1617.5px;top:20.3px;width:212.3px;height:48.0px;background:#eba52b;border-radius:5px;box-shadow:0 2px 4px rgba(0,0,0,.18);"></div>
<span class="t" style="font-size:20.5px;top:34px;font-weight:700;color:#fff;left:1655.63px;transform:scaleX(0.8693);">Create new order</span>
<span class="t" style="font-size:14.5px;top:37px;font-weight:700;letter-spacing:1.2px;left:2054.77px;transform:scaleX(1.0263);">CZ</span>
<span class="t" style="font-size:14.5px;top:37px;font-weight:700;letter-spacing:2px;left:2086.50px;transform:scaleX(1.1000);">EN</span>
<div class="b" style="left:2087.6px;top:56.6px;width:23.0px;height:1.6px;background:#222;"></div>
<svg class="b" style="left:2150px;top:27px" width="30" height="34" viewBox="0 0 30 34"><path d="M14.400 1.100C12.900 1.100 11.900 2.100 11.800 3.500C6.900 4.700 3.200 9 3.200 14.500V22.300C3.200 24.800 2.300 26.300 1.200 27.500V30.500H27.700V27.500C26.600 26.300 25.700 24.800 25.700 22.300V14.500C25.700 9 22 4.700 17 3.500C16.900 2.100 15.900 1.100 14.400 1.100Z" fill="#eba52b"/><path d="M11.400 30.300h6.100c0 1.300-1.400 2.200-3.050 2.200s-3.050-.9-3.050-2.200z" fill="#eba52b"/></svg>
<div class="b" style="left:2210.6px;top:15.0px;width:241.3px;height:58.6px;background:#fff;border-radius:7px;box-shadow:0 1px 5px rgba(0,0,0,.10);"></div>
<svg class="b" style="left:2237.200px;top:29px" width="32" height="32" viewBox="0 0 32 32"><circle cx="16" cy="16" r="15.600" fill="#eba52b"/><circle cx="16" cy="12.500" r="4.900" fill="#fff"/><path d="M7.200 23.700c0-3.400 5.300-4.600 8.800-4.600s8.800 1.200 8.800 4.600c-2.200 2.600-5.300 4.100-8.800 4.100s-6.600-1.500-8.800-4.100z" fill="#fff"/></svg>
<span class="t" style="font-size:20.5px;top:33px;-webkit-text-stroke:0.3px #141414;left:2276.70px;transform:scaleX(0.9407);">Administrator...</span>
<svg class="b" style="left:2407.200px;top:28.800px" width="19" height="19" viewBox="0 0 19 19"><circle cx="9.5" cy="9.5" r="9" fill="#f5c883"/><path d="M5.800 7.900 L9.5 11.300 L13.200 7.900" fill="none" stroke="#fff" stroke-width="2" stroke-linecap="round" stroke-linejoin="round"/></svg>
</header>
</body>
</html>
